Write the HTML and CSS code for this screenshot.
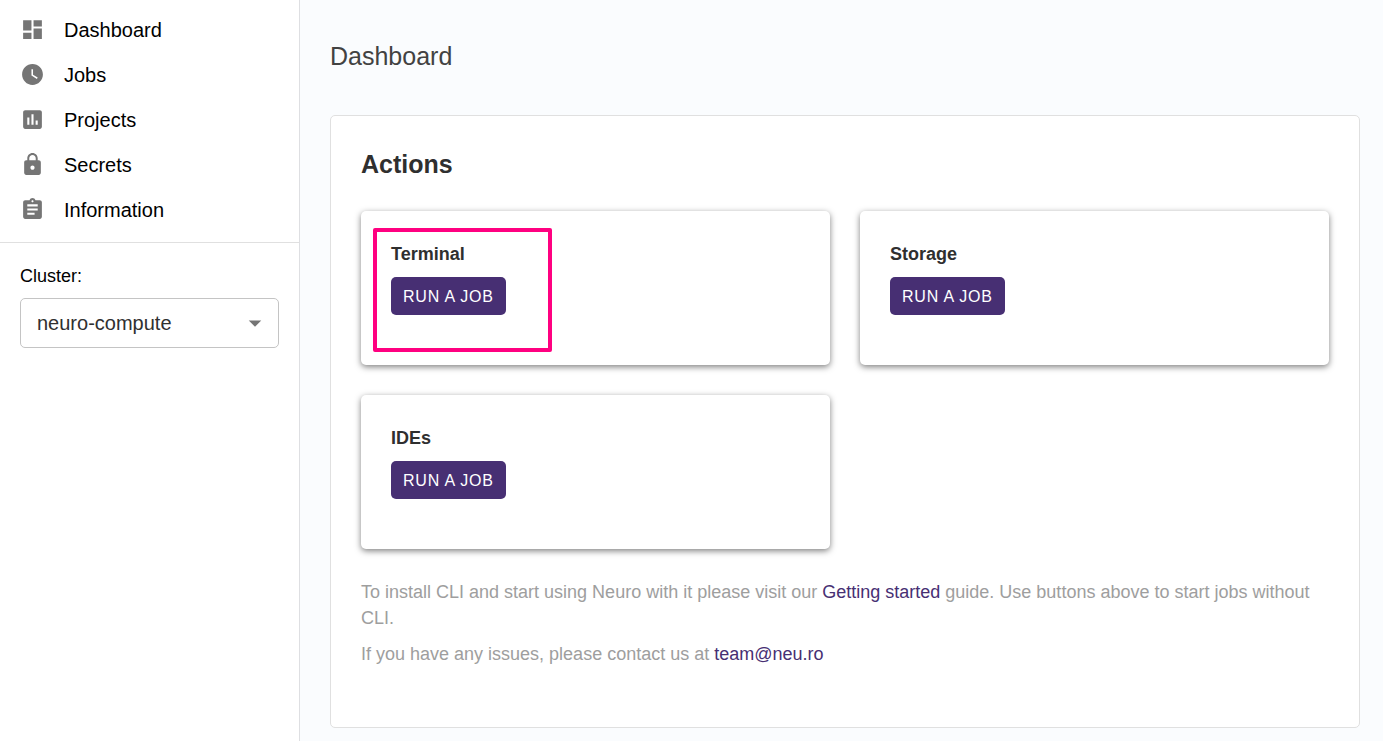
FILE: index.html
```html
<!DOCTYPE html>
<html lang="en">
<head>
<meta charset="utf-8">
<meta name="viewport" content="width=device-width, initial-scale=1">
<title>Dashboard</title>
<link rel="stylesheet" href="styles.css">
</head>
<body>
<div class="app">
  <aside class="sidebar">
    <nav class="nav">
      <a class="nav-item" href="#"><svg class="icon" viewBox="0 0 24 24" aria-hidden="true"><path d="M3 13h8V3H3v10zm0 8h8v-6H3v6zm10 0h8V11h-8v10zm0-18v6h8V3h-8z"/></svg><span class="nav-text">Dashboard</span></a>
      <a class="nav-item" href="#"><svg class="icon" viewBox="0 0 24 24" aria-hidden="true"><path d="M12 2C6.500 2 2 6.500 2 12s4.500 10 10 10 10-4.500 10-10S17.500 2 12 2zm4.200 14.200L11 13V7h1.500v5.200l4.500 2.700-.8 1.300z"/></svg><span class="nav-text">Jobs</span></a>
      <a class="nav-item" href="#"><svg class="icon" viewBox="0 0 24 24" aria-hidden="true"><path d="M19 3H5c-1.100 0-2 .9-2 2v14c0 1.100.9 2 2 2h14c1.100 0 2-.9 2-2V5c0-1.100-.9-2-2-2zM9 17H7v-7h2v7zm4 0h-2V7h2v10zm4 0h-2v-4h2v4z"/></svg><span class="nav-text">Projects</span></a>
      <a class="nav-item" href="#"><svg class="icon" viewBox="0 0 24 24" aria-hidden="true"><path d="M18 8h-1V6c0-2.760-2.240-5-5-5S7 3.240 7 6v2H6c-1.100 0-2 .9-2 2v10c0 1.100.9 2 2 2h12c1.100 0 2-.9 2-2V10c0-1.100-.9-2-2-2zm-6 9c-1.100 0-2-.9-2-2s.9-2 2-2 2 .9 2 2-.9 2-2 2zm3.100-9H8.900V6c0-1.710 1.390-3.100 3.100-3.100 1.710 0 3.100 1.390 3.100 3.100v2z"/></svg><span class="nav-text">Secrets</span></a>
      <a class="nav-item" href="#"><svg class="icon" viewBox="0 0 24 24" aria-hidden="true"><path d="M19 3h-4.180C14.400 1.840 13.300 1 12 1c-1.300 0-2.400.84-2.820 2H5c-1.100 0-2 .9-2 2v14c0 1.100.9 2 2 2h14c1.100 0 2-.9 2-2V5c0-1.100-.9-2-2-2zm-7 0c.55 0 1 .45 1 1s-.45 1-1 1-1-.45-1-1 .45-1 1-1zm2 14H7v-2h7v2zm3-4H7v-2h10v2zm0-4H7V7h10v2z"/></svg><span class="nav-text">Information</span></a>
    </nav>
    <div class="cluster">
      <label class="cluster-label" for="cluster">Cluster:</label>
      <div class="select-wrap">
        <select class="select" id="cluster"><option>neuro-compute</option></select>
        <svg class="caret" viewBox="0 0 24 24" aria-hidden="true"><path d="M7 10l5 5 5-5z"/></svg>
      </div>
    </div>
  </aside>
  <main class="main">
    <h1 class="page-title">Dashboard</h1>
    <section class="panel">
      <h2 class="panel-title">Actions</h2>
      <div class="cards">
        <article class="card">
          <h3 class="card-title">Terminal</h3>
          <button class="button" type="button">RUN A JOB</button>
          <span class="highlight"></span>
        </article>
        <article class="card">
          <h3 class="card-title">Storage</h3>
          <button class="button" type="button">RUN A JOB</button>
        </article>
        <article class="card">
          <h3 class="card-title">IDEs</h3>
          <button class="button" type="button">RUN A JOB</button>
        </article>
      </div>
      <div class="notes">
        <p class="note">To install CLI and start using Neuro with it please visit our <a class="link" href="#">Getting started</a> guide. Use buttons above to start jobs without CLI.</p>
        <p class="note">If you have any issues, please contact us at <a class="link" href="mailto:team@neu.ro">team@neu.ro</a></p>
      </div>
    </section>
  </main>
</div>
</body>
</html>
```
FILE: styles.css
```css
* { box-sizing: border-box; }
body {
  margin: 0;
  font-family: "Liberation Sans", Arial, sans-serif;
  font-size: 18px;
  color: #2f2f2f;
  background: #fafcfe;
}
h1, h2, h3, p { margin: 0; }
.app { display: flex; min-height: 100vh; }
.sidebar {
  flex: 0 0 300px;
  background: #fff;
  border-right: 1px solid #dedfe2;
}
.nav {
  padding: 7px 0 10px;
  border-bottom: 1px solid #e0e0e0;
}
.nav-item {
  display: flex;
  align-items: center;
  gap: 19px;
  height: 45px;
  padding: 0 20px;
  color: #000;
  font-size: 20px;
  text-decoration: none;
}
.nav-text { padding-top: 2px; }
.icon { width: 25px; height: 25px; fill: #757575; }
.cluster { padding: 20px; }
.cluster-label {
  display: block;
  margin-bottom: 9px;
  color: #000;
  line-height: 26px;
}
.select-wrap { position: relative; }
.select {
  display: block;
  width: 100%;
  height: 50px;
  padding: 0 40px 0 16px;
  border: 1px solid #c4c4c4;
  border-radius: 5px;
  background: #fff;
  color: #303030;
  font-family: inherit;
  font-size: 20px;
  appearance: none;
}
.caret {
  position: absolute;
  top: 10px;
  right: 9px;
  width: 30px;
  height: 30px;
  fill: #757575;
  pointer-events: none;
}
.main { flex: 1; min-width: 0; padding: 40px 23px 13px 30px; }
.page-title {
  margin-bottom: 43px;
  color: #424242;
  font-size: 25px;
  font-weight: 400;
  line-height: 32px;
}
.panel {
  padding: 32px 30px 60px;
  border: 1px solid #e0e0e0;
  border-radius: 5px;
  background: #fff;
}
.panel-title { font-size: 25px; line-height: 32px; }
.cards {
  display: grid;
  grid-template-columns: 1fr 1fr;
  gap: 30px;
  margin-top: 31px;
}
.card {
  position: relative;
  padding: 30px 30px 50px;
  border-radius: 5px;
  background: #fff;
  box-shadow: 0 2px 6px rgba(0, 0, 0, 0.5);
}
.card-title { margin-bottom: 10px; font-size: 18px; line-height: 26px; }
.button {
  display: block;
  height: 38px;
  padding: 1px 12px 0;
  border: 0;
  border-radius: 5px;
  background: #472f73;
  color: #fff;
  font-family: inherit;
  font-size: 16px;
  letter-spacing: 0.05em;
}
.highlight {
  position: absolute;
  top: 17px;
  left: 12px;
  width: 179px;
  height: 124px;
  border: 4px solid #ff0080;
  border-radius: 2px;
  pointer-events: none;
}
.notes { display: grid; gap: 10px; margin-top: 30px; }
.note { color: #9e9e9e; line-height: 26px; }
.link { color: #472f73; text-decoration: none; }
```
